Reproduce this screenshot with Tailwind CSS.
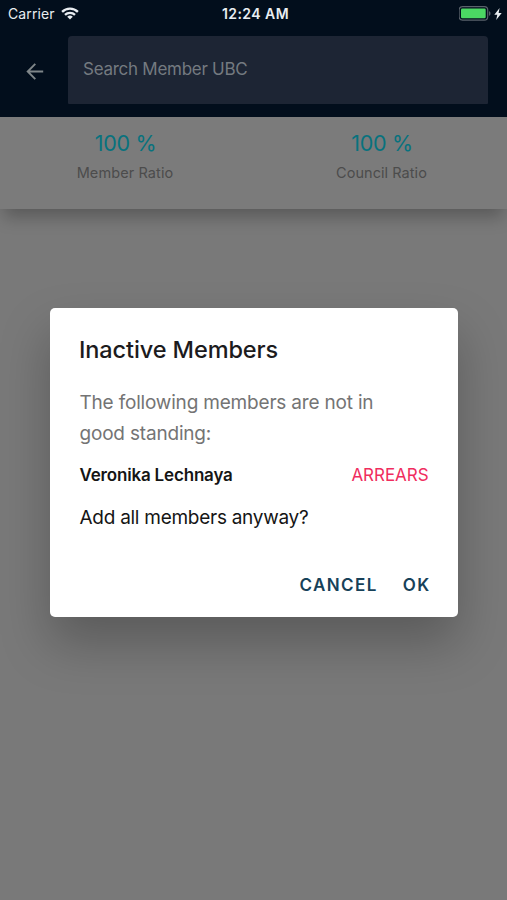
<!DOCTYPE html>
<html lang="en">
<head>
<meta charset="utf-8">
<title>Inactive Members</title>
<script src="https://cdn.jsdelivr.net/npm/@tailwindcss/browser@4"></script>
</head>
<body class="h-[900px] w-[507px] overflow-hidden bg-[#797979] font-['Inter','Liberation_Sans',sans-serif]">
<div class="relative flex h-full flex-col">
  <header class="relative z-10 h-[117px] shrink-0 bg-[#020e1c]">
    <div class="grid h-[28px] grid-cols-[1fr_auto_1fr] items-center pr-[5px] pl-[8px] text-[#e9edf1]">
      <div class="flex items-center gap-[6px]">
        <span class="text-[14px] leading-[28px] tracking-[0.1px]">Carrier</span>
        <svg class="-mt-[2px] h-[13px] w-[18px]" viewBox="0 0 18 13" fill="none" stroke="currentColor" stroke-width="2.3">
          <path d="M1.1 4.9a11.1 11.1 0 0 1 15.8 0"/>
          <path d="M4 7.9a7.1 7.1 0 0 1 10 0"/>
          <path d="M9 12.6 6.2 9.8a4 4 0 0 1 5.600 0z" fill="currentColor" stroke="none"/>
        </svg>
      </div>
      <span class="-mr-[1px] text-[14px] leading-[28px] font-semibold tracking-[0.450px]">12:24 AM</span>
      <div class="flex items-center justify-end gap-[3px]">
        <svg class="-mt-[2px] h-[15px] w-[32px]" viewBox="0 0 32 15">
          <rect x=".1" y=".7" width="28.600" height="13.400" rx="3.400" fill="none" stroke="#5a626b" stroke-width="1.2"/>
          <rect x="2" y="2.600" width="24.700" height="9.600" rx="1.200" fill="#4bd763"/>
          <path d="M30 5.200c2 .6 2 3.900 0 4.500z" fill="#5a626b"/>
        </svg>
        <svg class="-mt-[1px] h-[12px] w-[8px]" viewBox="0 0 8 12" fill="currentColor"><path d="M5.600 0 .3 6.700h3L2.200 12 7.700 5H4.600z"/></svg>
      </div>
    </div>
    <div class="flex pt-[7.500px] pl-[26px]">
      <svg class="mt-[27.500px] h-[17px] w-[18px] text-[#7f8689]" viewBox="0 0 18 17" fill="none" stroke="currentColor" stroke-width="1.9"><path d="M17.200 8.500H2M9.300.9 1.700 8.500l7.600 7.600"/></svg>
      <div class="ml-[24px] h-[68px] w-[420px] rounded-t-[4px] rounded-b-[1px] bg-[#1d2534] pl-[15px] text-[17px] leading-[67px] tracking-[-0.270px] text-[#747a80]">Search Member UBC</div>
    </div>
  </header>
  <section class="grid h-[92px] shrink-0 grid-cols-2 bg-[#7b7b7b] pr-[1px] text-center shadow-[0_12px_16px_-4px_rgba(0,0,0,0.26)]">
    <div class="pt-[11px] pr-[3px]">
      <p class="pl-[1px] text-[21.500px] leading-[30px] tracking-[-0.300px] text-[#08727e]">100 %</p>
      <p class="pt-[1px] text-[14.500px] leading-[28px] tracking-[0.100px] text-[#4c4c4c]">Member Ratio</p>
    </div>
    <div class="pt-[11px] pl-[4px]">
      <p class="pl-[1px] text-[21.500px] leading-[30px] tracking-[-0.300px] text-[#08727e]">100 %</p>
      <p class="pt-[1px] text-[14.500px] leading-[28px] tracking-[0.050px] text-[#4c4c4c]">Council Ratio</p>
    </div>
  </section>
  <main role="dialog" class="mt-[98.500px] ml-[50px] flex h-[309px] w-[408px] shrink-0 flex-col rounded-[5px] bg-white px-[29.500px] pt-[25.500px] shadow-[0_26px_50px_rgba(0,0,0,0.25)]">
    <h1 class="-ml-[0.500px] text-[23.500px] leading-[34px] font-medium tracking-[-0.100px] whitespace-nowrap text-[#1c1b1d]">Inactive Members</h1>
    <p class="mt-[20px] text-[19px] leading-[31px] tracking-[-0.190px] whitespace-nowrap text-[#747474]">The following members are not in<br>good standing:</p>
    <div class="mt-[10px] flex justify-between text-[17px] leading-[32px] whitespace-nowrap">
      <span class="font-semibold tracking-[-0.180px] text-[#151515]">Veronika Lechnaya</span>
      <span class="tracking-[-0.050px] text-[#f02d5e]">ARREARS</span>
    </div>
    <p class="mt-[10px] text-[19px] leading-[33px] tracking-[-0.270px] whitespace-nowrap text-[#151515]">Add all members anyway?</p>
    <div class="mt-[35px] flex justify-end gap-[25px] text-[17px] leading-[32px] font-semibold tracking-[1.400px] text-[#174159]">
      <button>CANCEL</button><button class="-mr-[2px]">OK</button>
    </div>
  </main>
</div>
</body>
</html>
